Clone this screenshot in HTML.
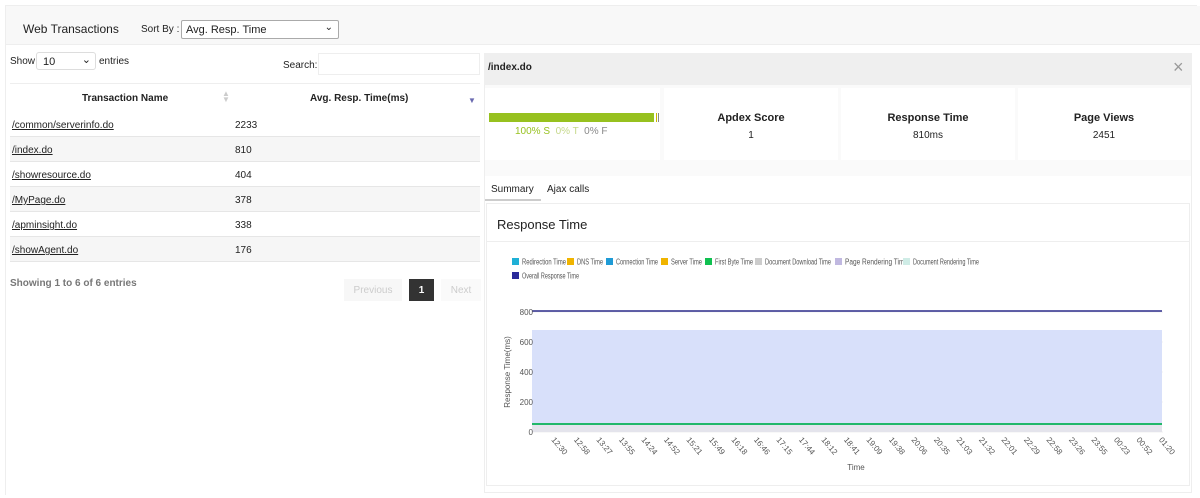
<!DOCTYPE html>
<html><head><meta charset="utf-8"><style>
*{box-sizing:border-box;margin:0;padding:0}
body{width:1200px;height:498px;background:#fff;font-family:"Liberation Sans",Arial,sans-serif;font-size:10px;color:#222;position:relative;overflow:hidden}
.a{position:absolute}
a{color:#222;text-decoration:underline}
</style></head><body>
<div class="a" style="left:5px;top:5px;width:1192px;height:490px;border:1px solid #eee;border-right:none;border-bottom:none"></div>
<div class="a" style="left:6px;top:6px;width:1194px;height:39px;background:#f8f8f8;border-bottom:1px solid #eee"></div>
<div class="a" style="left:23px;top:22px;font-size:12px">Web Transactions</div>
<div class="a" style="left:141px;top:24px">Sort By :</div>
<div class="a" style="left:181px;top:20px;width:158px;height:19px;border:1px solid #aaa;border-radius:2px;background:#fff;padding:3px 4px;font-size:11px">Avg. Resp. Time<span style="position:absolute;right:5px;top:1px;font-size:10px">&#8964;</span></div>
<div class="a" style="left:10px;top:56px">Show</div>
<div class="a" style="left:36px;top:52px;width:60px;height:18px;border:1px solid #ddd;border-radius:3px;padding:3px 6px;font-size:11px">10<span style="position:absolute;right:4px;top:0px">&#8964;</span></div>
<div class="a" style="left:99px;top:56px">entries</div>
<div class="a" style="left:283px;top:60px">Search:</div>
<div class="a" style="left:318px;top:53px;width:162px;height:22px;border:1px solid #eee"></div>
<div class="a" style="left:10px;top:83px;width:470px;height:183px;border-top:1px solid #eee"></div>
<div class="a" style="left:82px;top:93px;font-weight:bold">Transaction Name</div>
<div class="a" style="left:222px;top:91px;color:#ccc;font-size:8px;line-height:6px">▲<br>▼</div>
<div class="a" style="left:310px;top:93px;font-weight:bold">Avg. Resp. Time(ms)</div>
<div class="a" style="left:468px;top:96px;color:#6a6ab0;font-size:8px">▼</div>
<div class="a" style="left:10px;top:112px;width:470px">
<div style="height:25px;border-bottom:1px solid #e6e6e6;position:relative;background:#fff"><a class="a" style="left:2px;top:8px">/common/serverinfo.do</a><span class="a" style="left:225px;top:8px">2233</span></div>
<div style="height:25px;border-bottom:1px solid #e6e6e6;position:relative;background:#f6f6f6"><a class="a" style="left:2px;top:8px">/index.do</a><span class="a" style="left:225px;top:8px">810</span></div>
<div style="height:25px;border-bottom:1px solid #e6e6e6;position:relative;background:#fff"><a class="a" style="left:2px;top:8px">/showresource.do</a><span class="a" style="left:225px;top:8px">404</span></div>
<div style="height:25px;border-bottom:1px solid #e6e6e6;position:relative;background:#f6f6f6"><a class="a" style="left:2px;top:8px">/MyPage.do</a><span class="a" style="left:225px;top:8px">378</span></div>
<div style="height:25px;border-bottom:1px solid #e6e6e6;position:relative;background:#fff"><a class="a" style="left:2px;top:8px">/apminsight.do</a><span class="a" style="left:225px;top:8px">338</span></div>
<div style="height:25px;border-bottom:1px solid #e6e6e6;position:relative;background:#f6f6f6"><a class="a" style="left:2px;top:8px">/showAgent.do</a><span class="a" style="left:225px;top:8px">176</span></div>
</div>
<div class="a" style="left:10px;top:278px;font-weight:bold;color:#777">Showing 1 to 6 of 6 entries</div>
<div class="a" style="left:344px;top:279px;width:58px;height:22px;background:#f7f7f7;color:#ccc;text-align:center;padding-top:6px">Previous</div>
<div class="a" style="left:409px;top:279px;width:25px;height:22px;background:#333;color:#fff;text-align:center;padding-top:6px;font-weight:bold">1</div>
<div class="a" style="left:441px;top:279px;width:40px;height:22px;background:#fafafa;color:#ccc;text-align:center;padding-top:6px">Next</div>

<div class="a" style="left:484px;top:53px;width:708px;height:440px;border:1px solid #eee;background:#fafafa"></div>
<div class="a" style="left:484px;top:53px;width:708px;height:32px;background:#efefef"></div>
<div class="a" style="left:488px;top:62px;font-weight:bold">/index.do</div>
<div class="a" style="left:1173px;top:57px;font-size:18px;color:#999">×</div>
<div class="a" style="left:485px;top:88px;width:175px;height:72px;background:#fff"></div>
<div class="a" style="left:489px;top:113px;width:165px;height:9px;background:#97c11f"></div>
<div class="a" style="left:656px;top:113px;width:1px;height:9px;background:#c9b800"></div>
<div class="a" style="left:658px;top:113px;width:1px;height:9px;background:#888"></div>
<div class="a" style="left:515px;top:126px;color:#97c11f">100% S <span style="color:#c5d88a">&nbsp;0% T</span> <span style="color:#888">&nbsp;0% F</span></div>
<div class="a" style="left:664px;top:88px;width:174px;height:72px;background:#fff;text-align:center;padding-top:24px"><b style="font-size:11px">Apdex Score</b><br><div style="margin-top:6px">1</div></div>
<div class="a" style="left:841px;top:88px;width:174px;height:72px;background:#fff;text-align:center;padding-top:24px"><b style="font-size:11px">Response Time</b><br><div style="margin-top:6px">810ms</div></div>
<div class="a" style="left:1018px;top:88px;width:172px;height:72px;background:#fff;text-align:center;padding-top:24px"><b style="font-size:11px">Page Views</b><br><div style="margin-top:6px">2451</div></div>
<div class="a" style="left:485px;top:176px;width:706px;height:316px;background:#fff"></div>
<div class="a" style="left:491px;top:184px">Summary</div>
<div class="a" style="left:485px;top:199px;width:56px;height:2px;background:#ccc"></div>
<div class="a" style="left:547px;top:184px">Ajax calls</div>
<div class="a" style="left:486px;top:203px;width:704px;height:283px;border:1px solid #eee;background:#fff"></div>
<div class="a" style="left:497px;top:217px;font-size:13px">Response Time</div>
<div class="a" style="left:487px;top:241px;width:702px;height:1px;background:#eee"></div>
<svg class="a" style="left:0;top:0" width="1200" height="498" font-family="Liberation Sans, Arial, sans-serif" font-size="8" fill="#555">
<g font-size="8">
<rect x="512" y="258" width="7" height="7" fill="#1fb0d6"/><text x="522" y="264.5" textLength="44" lengthAdjust="spacingAndGlyphs">Redirection Time</text>
<rect x="567" y="258" width="7" height="7" fill="#f0b400"/><text x="577" y="264.5" textLength="26" lengthAdjust="spacingAndGlyphs">DNS Time</text>
<rect x="606" y="258" width="7" height="7" fill="#1f9bd6"/><text x="616" y="264.5" textLength="42" lengthAdjust="spacingAndGlyphs">Connection Time</text>
<rect x="661" y="258" width="7" height="7" fill="#f0b400"/><text x="671" y="264.5" textLength="31" lengthAdjust="spacingAndGlyphs">Server Time</text>
<rect x="705" y="258" width="7" height="7" fill="#10c050"/><text x="715" y="264.5" textLength="38" lengthAdjust="spacingAndGlyphs">First Byte Time</text>
<rect x="755" y="258" width="7" height="7" fill="#ccc"/><text x="765" y="264.5" textLength="66" lengthAdjust="spacingAndGlyphs">Document Download Time</text>
<rect x="835" y="258" width="7" height="7" fill="#c0b8e0"/><text x="845" y="264.5" textLength="63" lengthAdjust="spacingAndGlyphs">Page Rendering Time</text>
<rect x="903" y="258" width="7" height="7" fill="#cfece6"/><text x="913" y="264.5" textLength="66" lengthAdjust="spacingAndGlyphs">Document Rendering Time</text>
<rect x="512" y="272" width="7" height="7" fill="#2b2b9a"/><text x="522" y="278.5" textLength="57" lengthAdjust="spacingAndGlyphs">Overall Response Time</text>
</g>
<g stroke="#f0f0f0"><line x1="532" y1="312" x2="1163" y2="312"/><line x1="532" y1="342" x2="1163" y2="342"/><line x1="532" y1="372" x2="1163" y2="372"/><line x1="532" y1="402" x2="1163" y2="402"/><line x1="532" y1="432" x2="1163" y2="432"/></g>
<rect x="532" y="330" width="630" height="102" fill="#d8e0fa"/>
<rect x="532" y="424" width="630" height="8" fill="#e4e4ec"/>
<line x1="532" y1="424" x2="1162" y2="424" stroke="#22b86a" stroke-width="2"/>
<line x1="532" y1="311" x2="1162" y2="311" stroke="#2b2b8a" stroke-width="1.5"/>
<g text-anchor="end"><text x="533" y="315">800</text><text x="533" y="345">600</text><text x="533" y="375">400</text><text x="533" y="405">200</text><text x="533" y="435">0</text></g>
<text transform="translate(510,372) rotate(-90)" text-anchor="middle">Response Time(ms)</text>
<text x="856" y="470" text-anchor="middle">Time</text>
<g font-size="8">
<text transform="translate(551,440) rotate(50)">12:30</text><text transform="translate(573.5,440) rotate(50)">12:58</text><text transform="translate(596,440) rotate(50)">13:27</text><text transform="translate(618.5,440) rotate(50)">13:55</text><text transform="translate(641,440) rotate(50)">14:24</text><text transform="translate(663.5,440) rotate(50)">14:52</text><text transform="translate(686,440) rotate(50)">15:21</text><text transform="translate(708.5,440) rotate(50)">15:49</text><text transform="translate(731,440) rotate(50)">16:18</text><text transform="translate(753.5,440) rotate(50)">16:46</text><text transform="translate(776,440) rotate(50)">17:15</text><text transform="translate(798.5,440) rotate(50)">17:44</text><text transform="translate(821,440) rotate(50)">18:12</text><text transform="translate(843.5,440) rotate(50)">18:41</text><text transform="translate(866,440) rotate(50)">19:09</text><text transform="translate(888.5,440) rotate(50)">19:38</text><text transform="translate(911,440) rotate(50)">20:06</text><text transform="translate(933.5,440) rotate(50)">20:35</text><text transform="translate(956,440) rotate(50)">21:03</text><text transform="translate(978.5,440) rotate(50)">21:32</text><text transform="translate(1001,440) rotate(50)">22:01</text><text transform="translate(1023.5,440) rotate(50)">22:29</text><text transform="translate(1046,440) rotate(50)">22:58</text><text transform="translate(1068.5,440) rotate(50)">23:26</text><text transform="translate(1091,440) rotate(50)">23:55</text><text transform="translate(1113.5,440) rotate(50)">00:23</text><text transform="translate(1136,440) rotate(50)">00:52</text><text transform="translate(1158.5,440) rotate(50)">01:20</text>
</g>
</svg>
</body></html>
